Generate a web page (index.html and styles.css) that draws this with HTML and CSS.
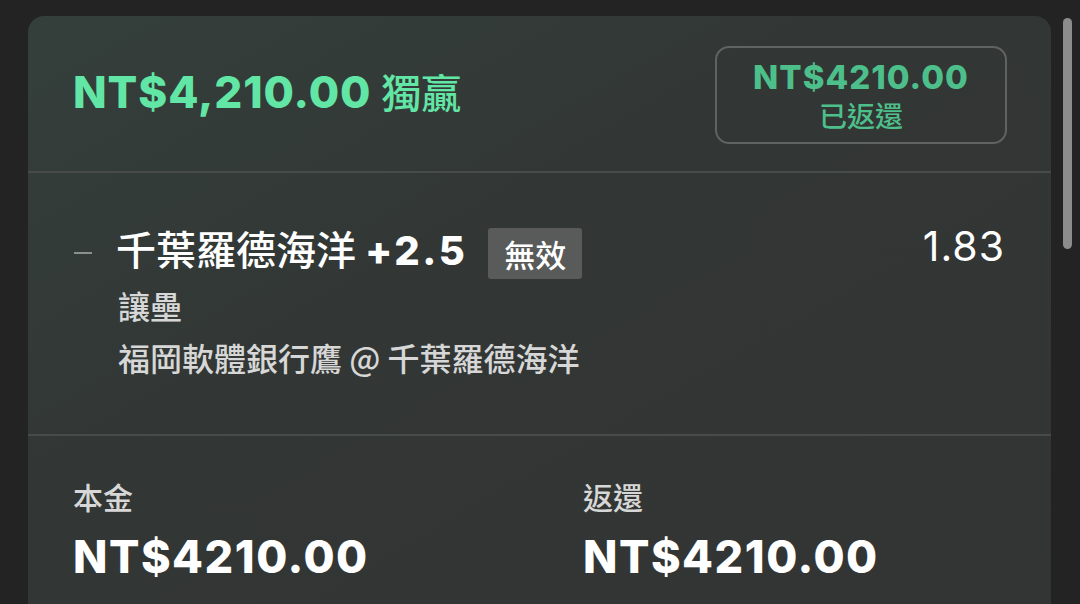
FILE: index.html
```html
<!DOCTYPE html>
<html>
  <head>
    <meta charset="UTF-8" />
    <title>投注單</title>
    <link rel="stylesheet" href="styles.css">
  </head>
  <body>
    <div class="page">
      <div class="card">
        <div class="card-head">
          <div class="head-title">
            <span class="amount">NT$4,210.00</span>
            <span class="market">獨贏</span>
          </div>
          <div class="refund-box">
            <span class="refund-amount">NT$4210.00</span>
            <span class="refund-label">已返還</span>
          </div>
        </div>

        <div class="selection">
          <div class="sel-row">
            <span class="dash"></span>
            <span class="sel-name">千葉羅德海洋 <b>+2.5</b></span>
            <span class="badge">無效</span>
            <span class="odds">1.83</span>
          </div>
          <div class="sel-sub">讓壘</div>
          <div class="sel-sub">福岡軟體銀行鷹 @ 千葉羅德海洋</div>
        </div>

        <div class="totals">
          <div class="total">
            <span class="total-label">本金</span>
            <span class="total-value">NT$4210.00</span>
          </div>
          <div class="total">
            <span class="total-label">返還</span>
            <span class="total-value">NT$4210.00</span>
          </div>
        </div>
      </div>
      <div class="scroll-thumb"></div>
    </div>
  </body>
</html>
```

FILE: styles.css
```css
:root {
  --bg: #232323;
  --card: #323534;
  --line: #474b49;
  --green: #62e6a5;
  --green-dim: #4dbf8a;
  --fg: #ffffff;
  --muted: #d6d7d6;
  --font: "Inter", "Noto Sans CJK TC", sans-serif;
  --cjk: "Noto Sans CJK TC", sans-serif;
}
html,
body {
  height: 100%;
}
body {
  margin: 0;
  overflow: hidden;
  background: var(--bg);
  font-family: var(--font);
  color: var(--fg);
}
.page {
  display: flex;
  align-items: flex-start;
  padding: 16px 0 0 28px;
  height: 100%;
  box-sizing: border-box;
}
.card {
  width: 1023px;
  height: 100%;
  flex-shrink: 0;
  border-radius: 16px 16px 0 0;
  background: linear-gradient(150deg, #343f3b 0%, #323634 45%, #323534 100%);
}
.scroll-thumb {
  width: 9px;
  height: 231px;
  margin: 2px 0 0 12px;
  border-radius: 5px;
  background: #8c8c8c;
}

/* header */
.card-head {
  display: flex;
  align-items: center;
  justify-content: space-between;
  height: 155px;
  padding: 0 44px 0 45px;
  border-bottom: 2px solid var(--line);
}
.head-title {
  display: flex;
  align-items: baseline;
  gap: 10px;
  color: var(--green);
  margin-bottom: 6px;
}
.amount {
  font-size: 44px;
  font-weight: 800;
  letter-spacing: 0.9px;
}
.market {
  font-family: var(--cjk);
  font-size: 40px;
  font-weight: 500;
}
.refund-box {
  box-sizing: border-box;
  width: 292px;
  height: 98px;
  margin-top: 3px;
  border: 2px solid #5f6361;
  border-radius: 14px;
  display: flex;
  flex-direction: column;
  align-items: center;
  justify-content: center;
  color: var(--green-dim);
  line-height: 1.2;
}
.refund-amount {
  font-size: 33px;
  font-weight: 800;
  letter-spacing: 1px;
}
.refund-label {
  font-family: var(--cjk);
  font-size: 28px;
  font-weight: 500;
  margin-top: 1px;
}

/* selection */
.selection {
  height: 263px;
  padding: 54px 46px 0 45px;
  box-sizing: border-box;
  border-bottom: 2px solid var(--line);
}
.sel-row {
  display: flex;
  align-items: center;
  height: 52px;
}
.dash {
  width: 18px;
  height: 2px;
  background: #8d8f8e;
  margin: 0 24px 0 1px;
}
.sel-name {
  font-family: var(--cjk);
  font-size: 40px;
  font-weight: 500;
  margin-bottom: 10px;
}
.sel-name b {
  font-family: var(--font);
  font-weight: 800;
  letter-spacing: 2.5px;
}
.badge {
  margin-left: 21px;
  padding: 0 16px;
  height: 51px;
  display: flex;
  align-items: center;
  border-radius: 3px;
  background: #585b5a;
  font-family: var(--cjk);
  font-size: 31px;
  font-weight: 500;
}
.odds {
  margin-left: auto;
  margin-bottom: 14px;
  font-size: 41px;
  font-weight: 400;
  letter-spacing: 1px;
}
.sel-sub {
  padding-left: 45px;
  font-family: var(--cjk);
  font-size: 32px;
  font-weight: 500;
  line-height: 52px;
  color: var(--muted);
}
.sel-sub:first-of-type {
  margin-top: 4px;
}

/* totals */
.totals {
  display: grid;
  grid-template-columns: 510px 1fr;
  padding: 40px 45px 0;
}
.total {
  display: flex;
  flex-direction: column;
}
.total-label {
  font-family: var(--cjk);
  font-size: 30px;
  font-weight: 500;
  color: var(--muted);
  line-height: 40px;
}
.total-value {
  margin-top: 14px;
  font-size: 45px;
  font-weight: 800;
  letter-spacing: 1.5px;
  line-height: 54px;
}
```
